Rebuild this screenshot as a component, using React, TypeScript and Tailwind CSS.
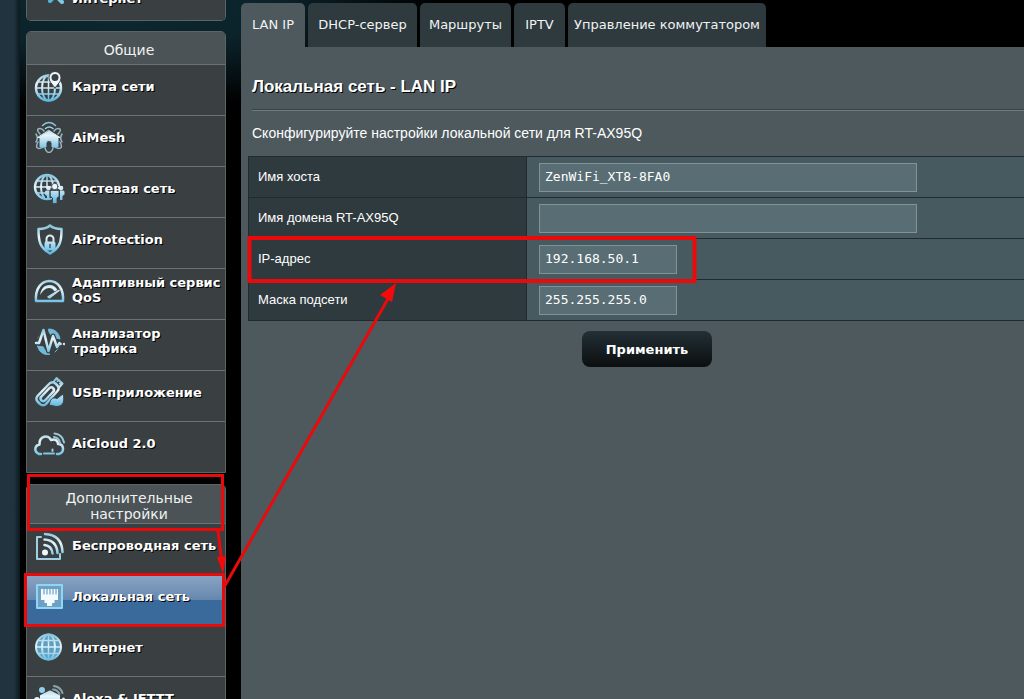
import { useState } from 'react';
import type { FormEvent, ReactNode } from 'react';

interface MenuEntry {
  label: string;
  icon: ReactNode;
}

const ICE = 'url(#ice)';

function Icon({ children }: { children: ReactNode }) {
  return (
    <svg
      viewBox="0 0 32 32"
      className="w-8 h-8 shrink-0"
      fill="none"
      stroke={ICE}
      strokeWidth="2"
      strokeLinecap="round"
      strokeLinejoin="round"
      aria-hidden="true"
    >
      {children}
    </svg>
  );
}

const networkMapIcon = (
  <Icon>
    <circle cx="15.5" cy="18" r="12.5" strokeWidth="2.5" />
    <ellipse cx="15.5" cy="18" rx="6.5" ry="12.5" />
    <path d="M15.5 6v24M3.5 18h24M5.5 12h19M5.5 24h20" strokeWidth="1.5" />
    <path d="M22 18c-3-4-6-6.500-6-10.500a6 6 0 0 1 12 0c0 4-3 6.500-6 10.500z" fill="#eef8fc" stroke="#3a3f42" strokeWidth="1" />
    <circle cx="22" cy="7.500" r="3.500" fill="#3a3f42" stroke="none" />
  </Icon>
);

const meshIcon = (
  <Icon>
    <path d="M9.500 4.500c4-4 9-4 13 0M12.500 7.500c2.500-2 5-2 7.500 0" strokeWidth="1.500" />
    <path d="M7 13c-6-6 1-7 4-3M25 13c6-6-1-7-4-3M5 21c-4 7 1 8 7 4M27 21c4 7-1 8-7 4M12 27c1.500 6 6.500 6 8 0M3 13c2 3 2 5 0 8M29 13c-2 3-2 5 0 8" stroke="#9ab4c0" strokeWidth="1.500" />
    <path d="M16 9.500 27 16.500h-2V26h-6v-3.500a3 3 0 0 0-6 0V26H7v-9.500H5z" fill={ICE} strokeWidth="1" />
  </Icon>
);

const guestIcon = (
  <Icon>
    <circle cx="14" cy="15" r="12" strokeWidth="2.500" />
    <ellipse cx="14" cy="15" rx="6" ry="12" />
    <path d="M14 3v24M2 15h24M4 9h20M4 21h20" strokeWidth="1.500" />
    <path d="M12 17h19v9h-5v5h-7v-5h-7z" fill="#3a3f42" stroke="none" />
    <g fill={ICE} stroke="none">
      <circle cx="15.500" cy="16" r="2.300" />
      <circle cx="28" cy="16" r="2.300" />
      <path d="M12 20q0-1.500 1.500-1.500h3V28H14v-4l-2-1.500z" />
      <path d="M31.500 20q0-1.500-1.500-1.500h-3V28h2.500v-4l2-1.500z" />
    </g>
    <circle cx="21.800" cy="14.500" r="3.200" fill="#eef8fc" stroke="#3a3f42" strokeWidth="0.800" />
    <path d="M17.500 18.500h8.500v6L24 26v5.500h-4.500V26l-2-1.500z" fill={ICE} stroke="#3a3f42" strokeWidth="0.800" />
  </Icon>
);

const shieldIcon = (
  <Icon>
    <path d="M17 2.500c3 2.500 6.500 3.500 11.500 3.500 0 12-1 18.500-11.500 24.500C6.500 24.500 5.500 18 5.500 6 10.500 6 14 5 17 2.500z" strokeWidth="2.500" />
    <path d="M13.500 19v-3a3.500 3.500 0 0 1 7 0v3" />
    <rect x="12" y="19" width="10" height="8" rx="1" fill={ICE} strokeWidth="1" />
    <path d="M17 21.500v3" stroke="#3a5666" strokeWidth="1.500" />
  </Icon>
);

const gaugeIcon = (
  <Icon>
    <path d="M3 27h27c.8-12-5-20-13.500-20S2 15 3 27z" strokeWidth="2.500" />
    <path d="M7 21c1-6 4-10 9.500-10 4 0 6.500 2 8 5l-3 1.500c-1.500-2.500-3-3.500-5.500-3.500-4 0-6 3-9 7z" fill={ICE} stroke="none" />
    <path d="m15 23 11-6.500-9.500 7.500z" fill={ICE} strokeWidth="1.500" />
  </Icon>
);

const trafficIcon = (
  <Icon>
    <path d="M16 4c6 0 10 4 11 10l-4-1-1-4-4 1-2-3zM4.500 21l6 1 1 3 5 1v3.500C10 30 6 27 4.500 21zM5 13l3-5M22 27l4-4" fill="#72b9d8" stroke="#72b9d8" strokeWidth="1" />
    <path d="M3 18h3l4.500-13 5 21 4.500-15 4 11 2.500-4" stroke="#3a3f42" strokeWidth="5" />
    <path d="M3 18h3l4.500-13 5 21 4.500-15 4 11 2.500-4" strokeWidth="2.500" />
    <path d="M27.500 19h.1M31 19h.1" strokeWidth="2.500" />
  </Icon>
);

const usbIcon = (
  <Icon>
    <path d="m4.500 20 12-12.500a4 4 0 0 1 6 0l2 2a4 4 0 0 1 0 5.500L13 28a4 4 0 0 1-6 0l-2.500-2.500a4 4 0 0 1 0-5.500z" strokeWidth="2.500" />
    <path d="m8.500 20.500 8-8.500c3-2 6 1.500 3.500 4l-8 8.500c-3 2-6-1.500-3.500-4z" strokeWidth="2.500" />
    <path d="m20.500 6 3-4 6 5.500L26 11.500M24.500 5l.1.100M27 7.500l.1.100" />
    <path d="M16.500 29.500c0-6 3-9 7.500-7l6-4.500c2 7 .5 12.500-6.500 12.500-2.500 0-4-1.500-7-1z" fill={ICE} stroke="#3a3f42" strokeWidth="1" />
  </Icon>
);

const cloudIcon = (
  <Icon>
    <path d="M8 27H6c-5-2-5-8 .5-9.500C6 9 15.500 7 18 13c4-1.500 7 .5 7 4 6 0 7 8 1 10h-2" strokeWidth="2.500" />
    <path d="M11 26.500h10M19.500 24v-1.500" />
    <path d="M21 10c3.500.5 5.500 2.500 6 6M21.500 6.500c5 .5 8.500 3.500 9.500 9" stroke="#9fc4d3" strokeWidth="2" />
  </Icon>
);

const wirelessIcon = (
  <Icon>
    <path d="M8 8H4v22h23v-5" stroke="#9fd0e6" />
    <circle cx="12" cy="23.500" r="3" fill="#eef8fc" stroke="none" />
    <path d="M11.500 16c5 .5 7.500 3 8 8.500M11.500 10.500c8 .5 12.500 5.500 13 13.500M12 5c11 .5 17 7 17.500 18" strokeWidth="2.500" />
  </Icon>
);

const lanIcon = (
  <Icon>
    <rect x="4" y="5" width="25" height="23" fill="#6f9fc2" stroke="#8ed6f4" />
    <path d="M8 9h17v11h-3.500v3H19v3h-5v-3h-2.500v-3H8z" fill="#f2fbff" stroke="none" />
    <path d="M11 8.500V14M14 8.500V14M17 8.500V14M20 8.500V14M23 8.500V14" stroke="#6f9fc2" strokeWidth="1.200" />
  </Icon>
);

const internetIcon = (
  <Icon>
    <circle cx="15.500" cy="16" r="12.500" fill="#5d9fc0" />
    <ellipse cx="15.500" cy="16" rx="6.500" ry="12.500" />
    <path d="M15.500 3.500v25M3 16h25M5.500 9.500h20M5.500 22.500h20" strokeWidth="1.500" />
  </Icon>
);

const alexaIcon = (
  <Icon>
    <path d="M17 9.500 26 14v13l-9 4-9-4V14z" fill={ICE} />
    <circle cx="9" cy="8" r="3" fill="#8fd0ec" stroke="none" />
    <circle cx="4" cy="18" r="3" fill="#dff2fa" stroke="none" />
    <circle cx="30.500" cy="17" r="1.500" fill="#dff2fa" stroke="none" />
    <path d="M20 7.500c3 0 5 1.500 6.500 4.500M21 4c4 .5 7 2.500 8.500 7" stroke="#8da4ae" strokeWidth="2" />
  </Icon>
);

const wizardIcon = (
  <Icon>
    <path d="m8 5 15 15" stroke="#7cc9e8" strokeWidth="4" />
    <path d="m11 19 9-9" stroke="#58b4da" strokeWidth="4" />
  </Icon>
);

const generalMenu: MenuEntry[] = [
  { label: 'Карта сети', icon: networkMapIcon },
  { label: 'AiMesh', icon: meshIcon },
  { label: 'Гостевая сеть', icon: guestIcon },
  { label: 'AiProtection', icon: shieldIcon },
  { label: 'Адаптивный сервис QoS', icon: gaugeIcon },
  { label: 'Анализатор трафика', icon: trafficIcon },
  { label: 'USB-приложение', icon: usbIcon },
  { label: 'AiCloud 2.0', icon: cloudIcon },
];

const advancedMenu: MenuEntry[] = [
  { label: 'Беспроводная сеть', icon: wirelessIcon },
  { label: 'Локальная сеть', icon: lanIcon },
  { label: 'Интернет', icon: internetIcon },
  { label: 'Alexa & IFTTT', icon: alexaIcon },
];

const tabs = [
  { name: 'LAN IP', width: 'w-16' },
  { name: 'DHCP-сервер', width: 'w-[109px]' },
  { name: 'Маршруты', width: 'w-[91px]' },
  { name: 'IPTV', width: 'w-[51px]' },
  { name: 'Управление коммутатором', width: 'w-[198px]' },
];

const fields = [
  { id: 'hostname', label: 'Имя хоста', wide: true },
  { id: 'domain', label: 'Имя домена RT-AX95Q', wide: true },
  { id: 'ip', label: 'IP-адрес', wide: false },
  { id: 'mask', label: 'Маска подсети', wide: false },
];

function MenuItem({ entry, active }: { entry: MenuEntry; active?: boolean }) {
  return (
    <li className="border-b border-[#6b7375] last:border-b-0">
      <a
        href="#"
        aria-current={active ? 'page' : undefined}
        className={`flex items-center gap-[7px] h-[50px] pl-[6px] pb-[8px] text-[13px] leading-[15px] font-bold text-white [text-shadow:1px_1px_0_#000] ${
          active ? 'bg-linear-to-b from-[#8ba5c3] from-0% via-[#6587ae] via-50% to-[#3a6a9c] to-50%' : 'bg-[#3a3f42]'
        }`}
      >
        {entry.icon}
        <span>{entry.label}</span>
      </a>
    </li>
  );
}

function MenuGroup({ title, entries, active }: { title: string; entries: MenuEntry[]; active?: string }) {
  return (
    <section className="rounded-t-[5px] border border-[#5b6365] overflow-hidden">
      <h2 className="flex items-center justify-center min-h-[33px] pl-[26px] pr-5 pt-[5px] pb-px text-center text-[14px] leading-[16px] text-[#f0f2f2] bg-[#4b5356] border-b border-[#6b7375]">
        {title}
      </h2>
      <ul>
        {entries.map((entry) => (
          <MenuItem key={entry.label} entry={entry} active={entry.label === active} />
        ))}
      </ul>
    </section>
  );
}

function Annotations() {
  return (
    <svg className="absolute left-0 top-0 w-[720px] h-[699px] pointer-events-none" viewBox="0 0 720 699" aria-hidden="true">
      <g fill="none" stroke="#ea0a0c" strokeWidth="3">
        <rect x="28.500" y="475.500" width="194" height="54" />
        <rect x="25.500" y="574.500" width="198" height="51" />
        <rect x="249.500" y="238" width="445" height="43" strokeWidth="4" />
        <path d="M218 530l3.500 30M223 589 389 297" />
      </g>
      <path d="m217 557 9-1-3 18zM396 283l-4 19-12-7z" fill="#f50a0c" />
    </svg>
  );
}

export default function App() {
  const [values, setValues] = useState<Record<string, string>>({
    hostname: 'ZenWiFi_XT8-8FA0',
    domain: '',
    ip: '192.168.50.1',
    mask: '255.255.255.0',
  });
  const [tab, setTab] = useState('LAN IP');

  function handleSubmit(e: FormEvent) {
    e.preventDefault();
  }

  return (
    <div className="relative flex h-screen overflow-hidden bg-black bg-[radial-gradient(ellipse_320px_110px_at_120px_0px,#0d2a33_0%,#0b2229_50%,#000_100%)] font-['DejaVu_Sans',sans-serif]">
      <svg width="0" height="0" className="absolute" aria-hidden="true">
        <linearGradient id="ice" gradientUnits="userSpaceOnUse" x1="0" y1="4" x2="0" y2="30">
          <stop offset="0" stopColor="#8cc6de" />
          <stop offset="0.4" stopColor="#e6f4fa" />
          <stop offset="1" stopColor="#5fb8e0" />
        </linearGradient>
      </svg>

      <div className="w-5 shrink-0 bg-linear-to-r from-[#20333f] from-70% to-[#0d1a20]" />

      <nav className="ml-[6px] w-[200px] shrink-0 -mt-6">
        <ul className="mb-[10px] rounded-b-[5px] border border-t-0 border-[#5b6365] overflow-hidden">
          <li>
            <a
              href="#"
              className="flex items-center gap-[1px] h-11 pl-[12px] text-[13px] leading-[15px] font-bold text-white bg-[#3a3f42] [text-shadow:1px_1px_0_#000]"
            >
              {wizardIcon}
              <span>Интернет</span>
            </a>
          </li>
        </ul>
        <MenuGroup title="Общие" entries={generalMenu} />
        <div className="h-[11px]" />
        <MenuGroup title="Дополнительные настройки" entries={advancedMenu} active="Локальная сеть" />
      </nav>

      <main className="flex flex-col flex-1 min-w-0 ml-[15px] -mr-[29px] pt-[3px]">
        <div role="tablist" className="flex gap-[3px]">
          {tabs.map(({ name, width }) => (
            <button
              key={name}
              type="button"
              role="tab"
              aria-selected={name === tab}
              onClick={() => setTab(name)}
              className={`h-[44px] rounded-t-[5px] text-[13px] whitespace-nowrap text-[#f0f3f3] ${width} ${
                name === tab ? 'bg-[#4d595d]' : 'bg-[#2f3a3e]'
              }`}
            >
              {name}
            </button>
          ))}
        </div>

        <form
          onSubmit={handleSubmit}
          className="flex-1 px-[7px] pt-[29px] bg-[#4d595d] font-['Liberation_Sans',Arial,sans-serif] text-white"
        >
          <h1 className="ml-1 text-[17px] leading-[22px] font-bold [text-shadow:1px_1px_0_#000]">
            Локальная сеть - LAN IP
          </h1>
          <hr className="ml-1 mt-[11px] border-t border-b border-t-[#37454a] border-b-[#6d797d]" />
          <p className="ml-1 mt-[12px] text-[14px] leading-[20px]">
            Сконфигурируйте настройки локальной сети для RT-AX95Q
          </p>

          <table className="w-full mt-[13px] border-collapse text-[13px]">
            <tbody>
              {fields.map((field) => (
                <tr key={field.id} className="h-[41px]">
                  <th scope="row" className="w-[278px] pl-[9px] text-left font-normal bg-[#2f3a3e] border border-[#1f2b30]">
                    <label htmlFor={field.id}>{field.label}</label>
                  </th>
                  <td className="pl-[12px] bg-[#475a5f] border border-[#1f2b30]">
                    <input
                      id={field.id}
                      type="text"
                      value={values[field.id]}
                      onChange={(e) => setValues({ ...values, [field.id]: e.target.value })}
                      className={`block h-[29px] px-[5px] pb-[2px] bg-[#596d74] border border-[#7f9398] font-['DejaVu_Sans_Mono',monospace] text-[13px] text-white outline-none ${
                        field.wide ? 'w-[378px]' : 'w-[138px]'
                      }`}
                    />
                  </td>
                </tr>
              ))}
            </tbody>
          </table>

          <div className="flex justify-center mt-[10px]">
            <button
              type="submit"
              className="w-[130px] h-9 pt-[2px] rounded-lg bg-linear-to-b from-[#223036] to-[#0c0f10] font-['DejaVu_Sans',sans-serif] text-[13px] font-bold text-white"
            >
              Применить
            </button>
          </div>
        </form>
      </main>

      <Annotations />
    </div>
  );
}
